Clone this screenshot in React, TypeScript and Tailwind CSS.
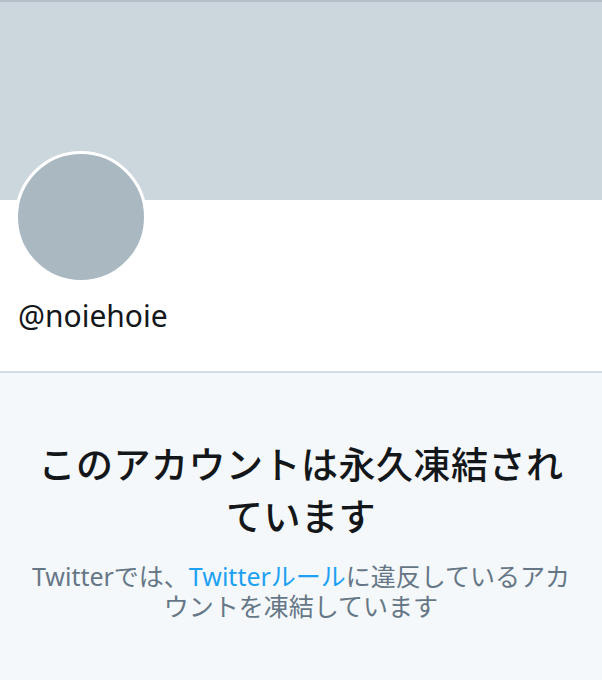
export default function App() {
  return (
    <div
      className="w-[602px] h-[680px] overflow-hidden bg-[#f5f8fa]"
      style={{ fontFamily: '"Noto Sans", "Noto Sans CJK JP", sans-serif' }}
    >
      {/* banner */}
      <div className="h-[200px] bg-[#ccd6dd] border-t-2 border-[#b4bfc8]" />

      {/* profile */}
      <div className="flex flex-col bg-white h-[173px] border-b-2 border-[#d3dce2] px-[15px]">
        <div className="-mt-[49px] w-[132px] h-[132px] rounded-full border-[3px] border-white bg-[#aab8c2]" />
        <p className="mt-[15px] pl-[3px] text-[30px] leading-[36px] text-[#14171a]">@noiehoie</p>
      </div>

      {/* suspended notice */}
      <div className="px-[24px] pt-[66px] text-center">
        <h1 className="px-[6px] text-[37px] leading-[52px] font-medium text-[#14171a] tracking-[0.5px]">
          このアカウントは永久凍結されています
        </h1>
        <p className="mt-[18px] text-[25px] leading-[30px] text-[#657786]">
          Twitterでは、<span className="text-[#1da1f2]">Twitterルール</span>に違反しているアカウントを凍結しています
        </p>
      </div>
    </div>
  );
}
